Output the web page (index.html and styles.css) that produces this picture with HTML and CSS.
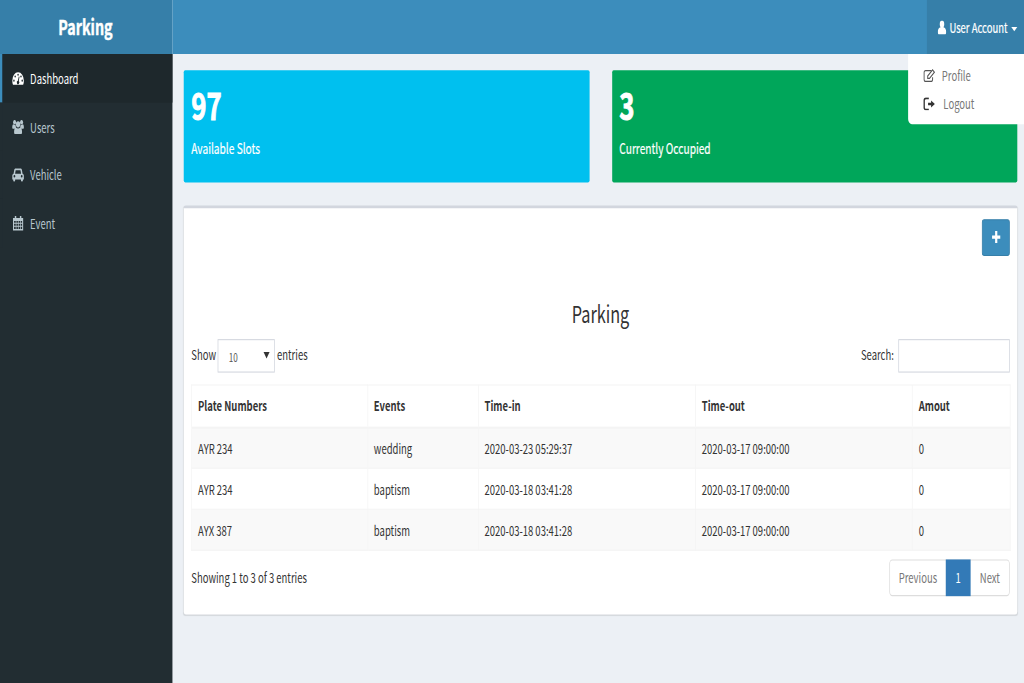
FILE: index.html
```html
<!DOCTYPE html>
<html lang="en">
<head>
<meta charset="utf-8">
<title>Parking</title>
<link rel="stylesheet" href="styles.css">
</head>
<body>
<div class="viewport">
<div class="app">
  <header class="header">
    <div class="logo">Parking</div>
    <div class="navbar">
      <div class="account">
        <svg class="user-icon" viewBox="0 0 12 14"><path d="M6 0a3.3 3.6 0 0 1 3.2 3.6c0 1.400-.5 2.400-1.200 3.100C10.500 7 12 8.700 12 11.400 12 13 11.200 14 10 14H2c-1.200 0-2-1-2-2.600C0 8.700 1.500 7 4 6.700 3.300 6 2.800 5 2.800 3.600A3.300 3.600 0 0 1 6 0z"/></svg>
        <span>User Account</span><i class="caret"></i>
      </div>
      <div class="dropdown">
        <div class="menu-item">
          <svg viewBox="0 0 16 14" preserveAspectRatio="none"><path d="M11 1.500H3.200A2 2 0 0 0 1.200 3.500v7.300a2 2 0 0 0 2 2h7.300a2 2 0 0 0 2-2V8.500" fill="none" stroke="currentColor" stroke-width="1.300"/><path d="M6 7.200 12.500.8l2.400 2.400-6.500 6.400H6z" fill="none" stroke="currentColor" stroke-width="1.300"/></svg>
          <span>Profile</span>
        </div>
        <div class="menu-item logout">
          <svg viewBox="0 0 16 14" preserveAspectRatio="none"><path d="M7.500 1.200H3.500A2.200 2.200 0 0 0 1.300 3.400v7.200a2.200 2.200 0 0 0 2.200 2.200h4" fill="none" stroke="currentColor" stroke-width="1.900"/><path d="M6.500 5.700h4V3.400L15.500 7l-5 3.600V8.300h-4z"/></svg>
          <span>Logout</span>
        </div>
      </div>
    </div>
  </header>
  <div class="body">
    <nav class="sidebar">
      <a class="nav-item active"><svg viewBox="0 0 16 14"><path fill-rule="evenodd" d="M8 1a8 8 0 0 1 8 8c0 1.500-.3 2.800-1 4H1c-.7-1.200-1-2.500-1-4a8 8 0 0 1 8-8zM8 2.300a1 1 0 1 0 0 2 1 1 0 0 0 0-2zM4 4a1 1 0 1 0 0 2 1 1 0 0 0 0-2zm8 0a1 1 0 1 0 0 2 1 1 0 0 0 0-2zM2.300 8a1 1 0 1 0 0 2 1 1 0 0 0 0-2zm11.400 0a1 1 0 1 0 0 2 1 1 0 0 0 0-2zM9 5l-1.300 4A1.700 1.700 0 1 0 9 9.300L10 5.300z"/></svg><span>Dashboard</span></a>
      <a class="nav-item"><svg viewBox="0 0 16 14"><circle cx="3.200" cy="2.200" r="2.100"/><circle cx="12.800" cy="2.200" r="2.100"/><circle cx="8" cy="4.200" r="3"/><path d="M0 7.500C0 5.500.5 4.300 1.500 4.300c1 .6 2 .5 3 .2C4.500 6 5 6.700 5.500 7.300 4 7.400 3.300 8 3 8.500H1.300C.5 8.500 0 8.200 0 7.500zM16 7.500c0-2-.5-3.200-1.500-3.200-1 .6-2 .5-3 .2 0 1.500-.5 2.200-1 2.800 1.500.1 2.200.7 2.500 1.200h1.700c.8 0 1.300-.3 1.300-1zM5 7.200c2 1.300 4 1.300 6 0 1.800 0 2.500 2 2.500 4.600 0 1.400-.8 2.200-2 2.200h-7c-1.200 0-2-.8-2-2.200C2.500 9.200 3.200 7.200 5 7.200z"/></svg><span>Users</span></a>
      <a class="nav-item"><svg viewBox="0 0 16 14"><path fill-rule="evenodd" d="M4.500 1h7c.9 0 1.600.5 1.800 1.400L14.200 6C15.300 6.100 16 6.900 16 8v3.500h-1.300V12c0 2-2.700 2-2.700 0v-.5H4v.5c0 2-2.700 2-2.700 0v-.5H0V8c0-1.100.7-1.900 1.800-2l.9-3.600C2.900 1.500 3.600 1 4.500 1zM4.700 2.700 3.900 6h8.200l-.8-3.300zM3 7.400a1.200 1.200 0 1 0 0 2.400 1.200 1.200 0 0 0 0-2.400zm10 0a1.200 1.200 0 1 0 0 2.400 1.200 1.200 0 0 0 0-2.400z"/></svg><span>Vehicle</span></a>
      <a class="nav-item"><svg viewBox="0 0 16 14"><path fill-rule="evenodd" d="M1 2h2.500V0h2v2h5V0h2v2H15v12H1zM2.500 4.700v1.700h2.300V4.700zm3.200 0v1.700h2.100V4.700zm3 0v1.700h2.100V4.700zm3 0v1.700h1.900V4.700zM2.500 7.400v2h2.300v-2zm3.200 0v2h2.100v-2zm3 0v2h2.100v-2zm3 0v2h1.900v-2zM2.500 10.400v2h2.300v-2zm3.200 0v2h2.100v-2zm3 0v2h2.100v-2zm3 0v2h1.900v-2z"/></svg><span>Event</span></a>
    </nav>
    <main class="content">
      <div class="stats">
        <div class="stat blue"><div class="num">97</div><div class="label">Available Slots</div></div>
        <div class="stat green"><div class="num">3</div><div class="label">Currently Occupied</div></div>
      </div>
      <section class="panel">
        <div class="panel-head"><button class="add"><svg viewBox="0 0 12 12"><path d="M4.400 0h3.200v4.400H12v3.200H7.600V12H4.400V7.600H0V4.400h4.400z"/></svg></button></div>
        <h2 class="title">Parking</h2>
        <div class="controls">
          <span>Show</span>
          <div class="select"><span>10</span><i class="arrow"></i></div>
          <span class="grow">entries</span>
          <span>Search:</span>
          <input class="search" type="text" aria-label="Search">
        </div>
        <table class="grid">
          <colgroup><col class="c1"><col class="c2"><col class="c3"><col class="c4"><col class="c5"></colgroup>
          <thead><tr><th>Plate Numbers</th><th>Events</th><th>Time-in</th><th>Time-out</th><th>Amout</th></tr></thead>
          <tbody>
            <tr><td>AYR 234</td><td>wedding</td><td>2020-03-23 05:29:37</td><td>2020-03-17 09:00:00</td><td>0</td></tr>
            <tr><td>AYR 234</td><td>baptism</td><td>2020-03-18 03:41:28</td><td>2020-03-17 09:00:00</td><td>0</td></tr>
            <tr><td>AYX 387</td><td>baptism</td><td>2020-03-18 03:41:28</td><td>2020-03-17 09:00:00</td><td>0</td></tr>
          </tbody>
        </table>
        <div class="foot">
          <span>Showing 1 to 3 of 3 entries</span>
          <div class="pager"><span class="prev">Previous</span><span class="current">1</span><span class="next">Next</span></div>
        </div>
      </section>
    </main>
  </div>
</div>
</div>
</body>
</html>
```

FILE: styles.css
```css
* { box-sizing: border-box; }
body { margin: 0; background: #ecf0f5; }
.viewport { width: 1024px; height: 683px; overflow: hidden; }

.app {
  width: 1359.8px;
  height: 633px;
  transform: scale(0.753, 1.08);
  transform-origin: 0 0;
  display: flex;
  flex-direction: column;
  background: #ecf0f5;
  color: #333;
  font: 12.6px/20px "Noto Sans CJK SC", "Noto Sans", sans-serif;
  white-space: nowrap;
}
svg { fill: currentColor; display: block; flex: none; }

.header { display: flex; height: 50px; flex: none; color: #fff; }
.logo {
  width: 229px;
  padding-right: 2px;
  background: #367fa9;
  font-size: 19px;
  font-weight: 700;
  line-height: 47px;
  text-align: center;
  -webkit-text-stroke: .4px #fff;
}
.navbar { flex: 1; position: relative; display: flex; justify-content: flex-end; background: #3c8dbc; }
.account { width: 129px; padding: 1px 0 0 14px; display: flex; align-items: center; background: #367fa9; -webkit-text-stroke: .2px #fff; }
.user-icon { width: 12px; height: 13px; margin-right: 4px; }
.caret { margin-left: 5px; margin-top: 2px; border: 4px solid transparent; border-top-color: #fff; border-bottom: 0; }
.dropdown {
  position: absolute;
  top: 50px;
  right: 0;
  width: 154px;
  height: 65px;
  padding: 7px 0 0 20px;
  background: #fff;
  border-radius: 0 0 0 5px;
  color: #777;
}
.menu-item { display: flex; align-items: center; height: 26px; }
.menu-item svg { width: 16px; height: 12.5px; margin-right: 9px; color: #555; }
.menu-item.logout svg { margin-right: 11px; color: #333; }

.body { flex: 1; display: flex; min-height: 0; }
.sidebar { width: 229px; background: #222d32; color: #b8c7ce; }
.nav-item { display: flex; align-items: center; height: 44.7px; padding: 1px 0 0 13px; border-left: 3px solid #222d32; }
.nav-item.active { background: #1e282c; border-left-color: #3c8dbc; color: #fff; }
.nav-item svg { width: 16px; height: 13.5px; margin-right: 8px; }

.content { flex: 1; padding: 15px 8px 0 15px; }
.stats { display: flex; gap: 30px; width: 1107px; }
.stat { flex: 1; height: 104px; padding: 7.5px 10px; border-radius: 2px; color: #fff; }
.blue { background: #00c0ef; }
.green { background: #00a65a; }
.num { font-size: 34.2px; font-weight: 700; line-height: 46px; -webkit-text-stroke: .9px #fff; }
.label { font-size: 13.5px; line-height: 20px; margin-top: 8.5px; -webkit-text-stroke: .2px #fff; }

.panel {
  width: 1107px;
  height: 379px;
  margin-top: 21px;
  padding: 10px;
  background: #fff;
  border-top: 3px solid #d2d6de;
  border-radius: 3px;
  box-shadow: 0 1px 1px rgba(0, 0, 0, .1);
}
.panel-head { display: flex; justify-content: flex-end; }
.add {
  width: 37px;
  height: 34px;
  padding: 0 0 1px;
  display: flex;
  align-items: center;
  justify-content: center;
  background: #3c8dbc;
  border: 1px solid #367fa9;
  border-radius: 3px;
  color: #fff;
}
.add svg { width: 12px; height: 11px; }
.title { margin: 40px 0 0; font-size: 21.6px; font-weight: 400; line-height: 26px; text-align: center; }
.controls { display: flex; align-items: center; height: 31px; margin-top: 11px; }
.controls > span { padding-bottom: 4px; }
.grow { flex: 1; }
.select {
  display: flex;
  align-items: center;
  justify-content: space-between;
  width: 76px;
  height: 31px;
  margin: 0 3px 0 2px;
  padding: 1px 6px 0 14px;
  border: 1px solid #d2d6de;
  font-size: 10.8px;
  color: #555;
}
.arrow { border: 4px solid transparent; border-top: 6px solid #333; border-bottom: 0; margin-top: -2px; }
.search { width: 148px; height: 31px; margin-left: 6px; border: 1px solid #d2d6de; background: #fff; }

.grid { width: 1087px; margin-top: 11px; border-collapse: collapse; table-layout: fixed; }
.c1 { width: 233.5px; }
.c2 { width: 147px; }
.c3 { width: 288.5px; }
.c4 { width: 288px; }
.c5 { width: 130px; }
.grid th, .grid td { height: 38px; padding: 0 8px; border: 1px solid #f4f4f4; text-align: left; }
.grid th { height: 39px; font-weight: 700; border-bottom-width: 2px; }
.grid tbody tr:nth-child(odd) { background: #f9f9f9; }

.foot { display: flex; justify-content: space-between; align-items: center; height: 34px; margin-top: 8px; }
.foot > span { padding-bottom: 1px; }
.pager { display: flex; width: 160px; height: 34px; border: 1px solid #ddd; border-radius: 4px; line-height: 32px; text-align: center; color: #777; }
.prev { width: 74px; }
.current { width: 33px; margin: -1px 0; padding-top: 1px; background: #337ab7; color: #fff; }
.next { flex: 1; }
```
